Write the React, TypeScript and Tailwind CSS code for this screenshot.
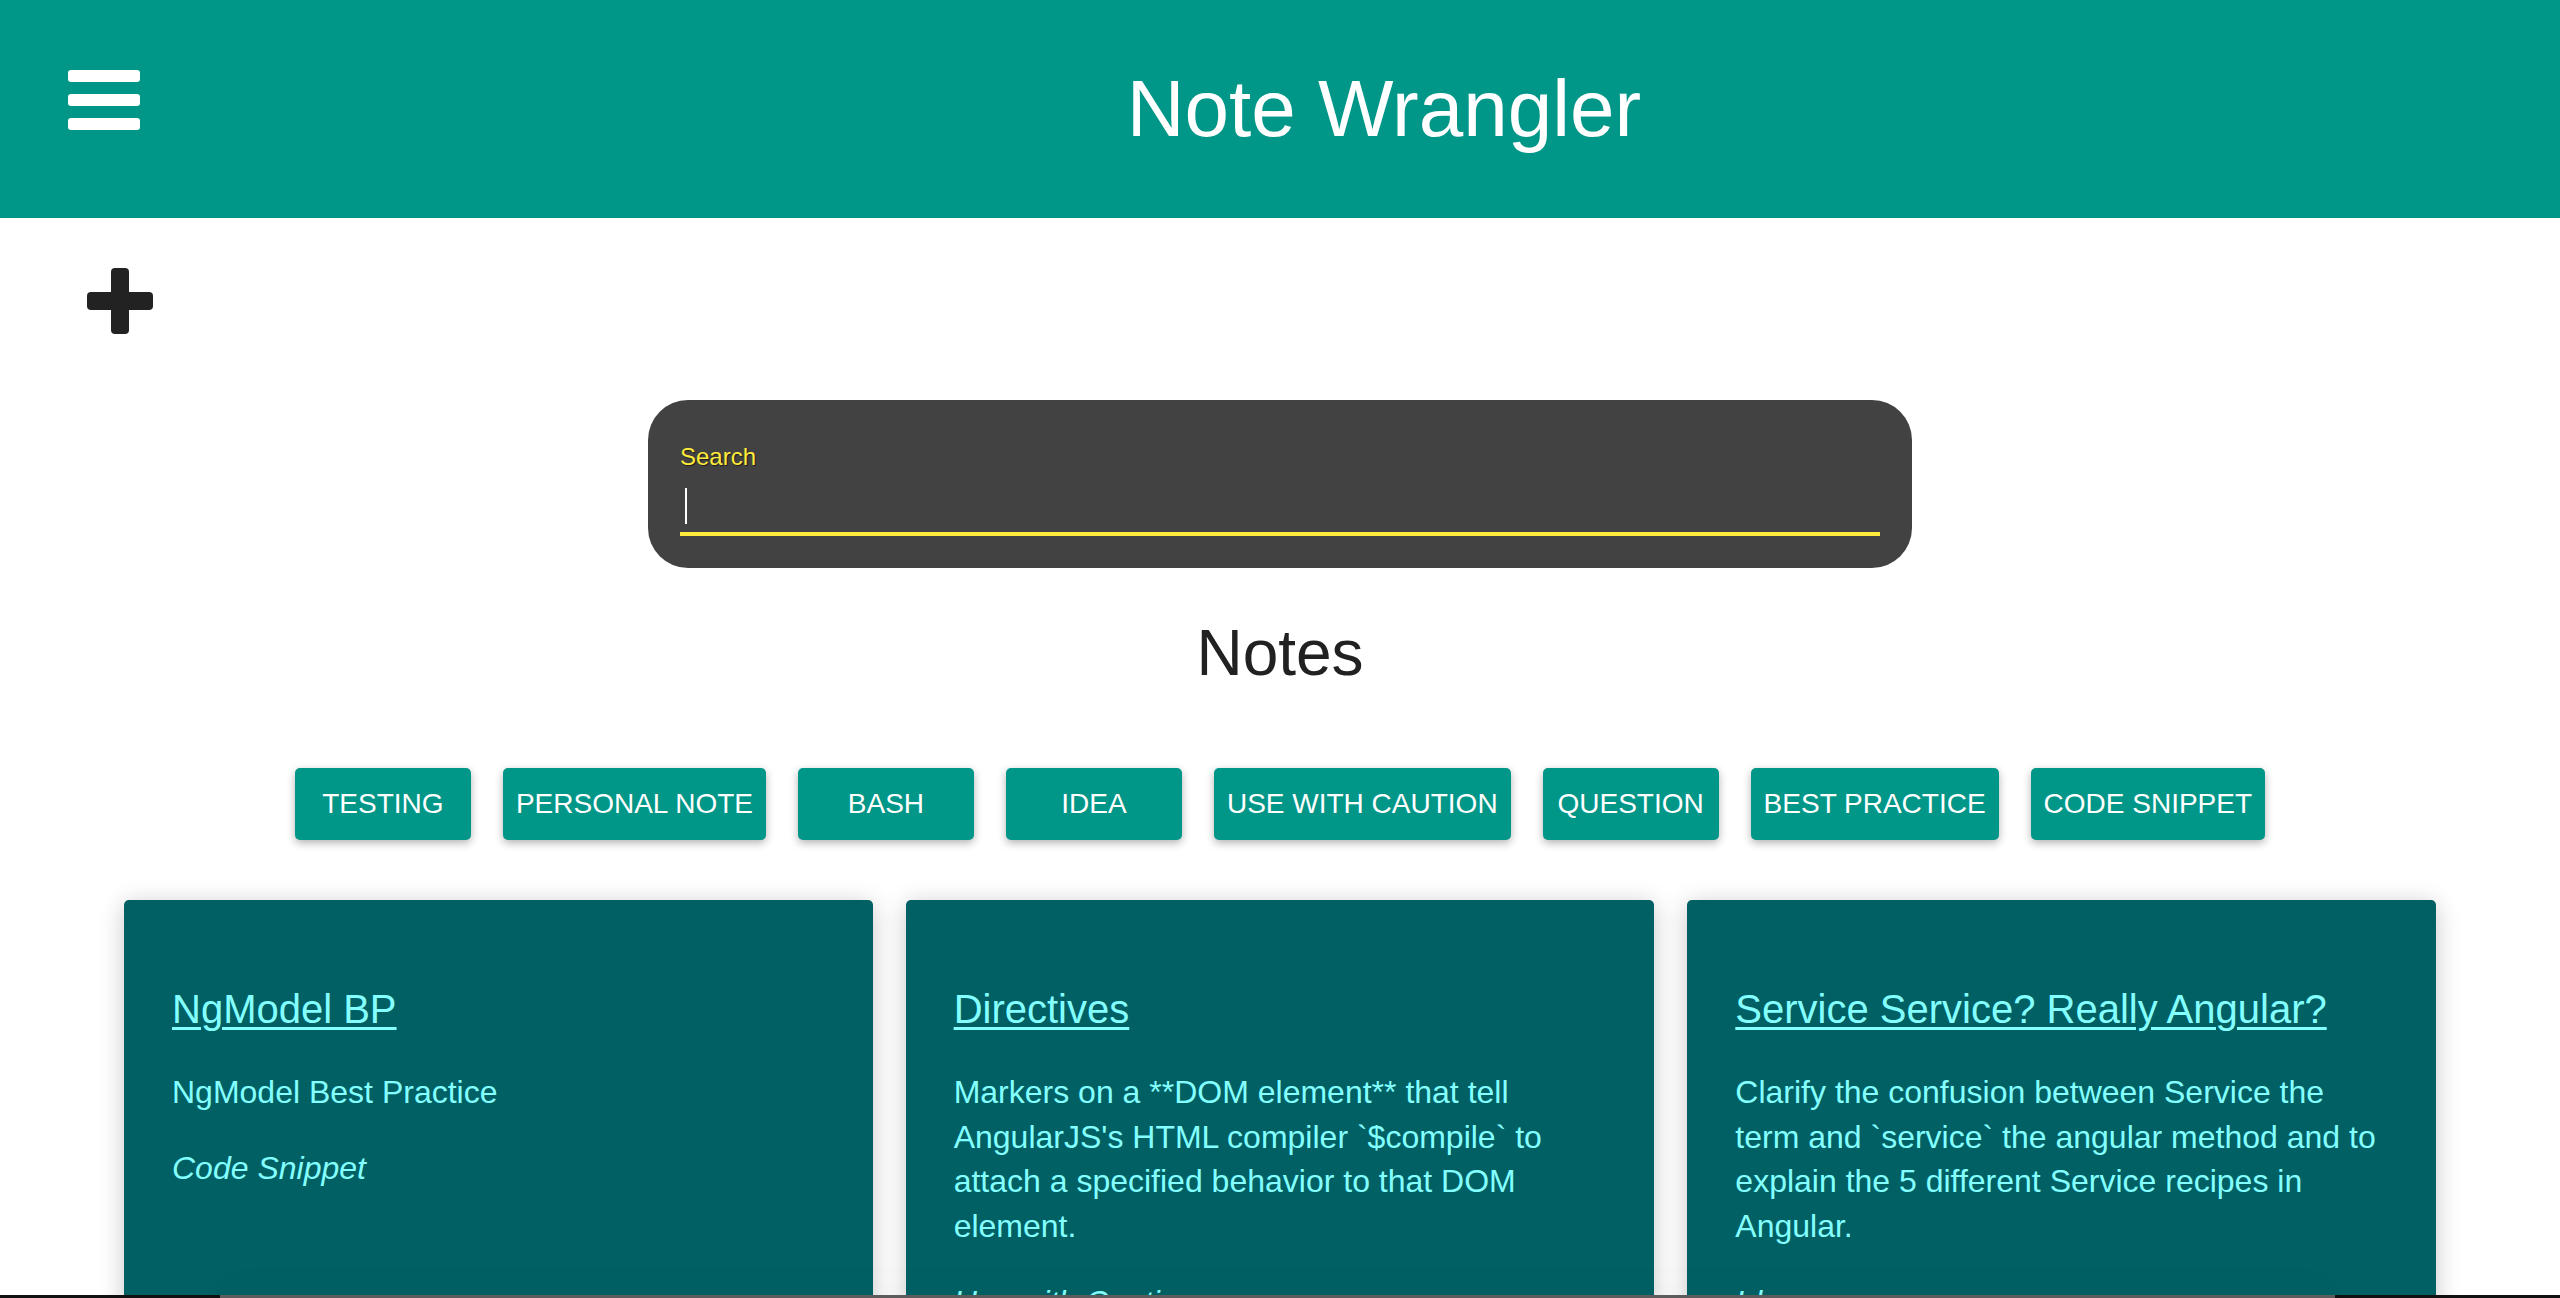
import React from "react";

const tags = [
  "Testing",
  "Personal Note",
  "Bash",
  "Idea",
  "Use with Caution",
  "Question",
  "Best Practice",
  "Code Snippet",
];

const notes = [
  {
    title: "NgModel BP",
    body: "NgModel Best Practice",
    tag: "Code Snippet",
  },
  {
    title: "Directives",
    body: "Markers on a **DOM element** that tell AngularJS's HTML compiler `$compile` to attach a specified behavior to that DOM element.",
    tag: "Use with Caution",
  },
  {
    title: "Service Service? Really Angular?",
    body: "Clarify the confusion between Service the term and `service` the angular method and to explain the 5 different Service recipes in Angular.",
    tag: "Idea",
  },
];

export default function App() {
  return (
    <div className="min-h-screen bg-white font-['Liberation_Sans',Arial,sans-serif] text-[#212121]">
      <header className="flex h-[218px] bg-[#009688] text-white">
        <div className="w-[208px] shrink-0 pl-[68px] pt-[70px]">
          <button className="flex flex-col gap-[12px]" aria-label="menu">
            <span className="block h-[12px] w-[72px] rounded-[3px] bg-white" />
            <span className="block h-[12px] w-[72px] rounded-[3px] bg-white" />
            <span className="block h-[12px] w-[72px] rounded-[3px] bg-white" />
          </button>
        </div>
        <div className="flex flex-1 items-center justify-center">
          <h1 className="text-[80px] font-normal leading-[1.15]">Note Wrangler</h1>
        </div>
      </header>

      <main className="flex flex-col">
        <div className="pl-[87px] pt-[50px]">
          <svg className="block" width="66" height="66" viewBox="0 0 66 66">
            <rect x="24" y="0" width="18" height="66" rx="4" fill="#222222" />
            <rect x="0" y="24" width="66" height="18" rx="4" fill="#222222" />
          </svg>
        </div>

        <div className="mt-[66px] flex justify-center">
          <div className="flex h-[168px] w-[1264px] flex-col rounded-[40px] bg-[#424242] px-[32px] pt-[43px]">
            <label className="text-[24px] leading-[28px] text-[#ffeb3b] [text-shadow:1px_1px_1px_rgba(0,0,0,0.6)]">
              Search
            </label>
            <div className="h-[61px]">
              <span className="ml-[5px] mt-[17px] block h-[36px] w-[2px] bg-white" />
            </div>
            <div className="h-[4px] bg-[#ffeb3b]" />
          </div>
        </div>

        <h2 className="mt-[47px] text-center text-[64px] font-normal leading-[1.2] text-[#212121]">Notes</h2>

        <div className="mt-[76px] flex justify-center gap-[32px]">
          {tags.map((t) => (
            <button
              key={t}
              className="h-[72px] min-w-[176px] rounded-[5px] bg-[#009688] px-[13px] text-[28px] uppercase text-white shadow-[0_3px_8px_rgba(0,0,0,0.3)]"
            >
              {t}
            </button>
          ))}
        </div>

        <div className="mt-[60px] grid grid-cols-3 gap-[33px] px-[124px] pb-[120px]">
          {notes.map((n) => (
            <div
              key={n.title}
              className="min-h-[520px] rounded-[5px] bg-[#006064] px-[48px] pt-[85px] pb-[60px] text-[#84ffff] shadow-[0_4px_24px_rgba(0,0,0,0.22)]"
            >
              <a href="#" className="block text-[40px] leading-[48px] underline decoration-[3px] underline-offset-[4px]">
                {n.title}
              </a>
              <p className="mt-[37px] text-[32px] leading-[1.4]">{n.body}</p>
              <p className="mt-[31px] text-[32px] italic leading-[1.4]">{n.tag}</p>
            </div>
          ))}
        </div>
      </main>

      <div className="pointer-events-none fixed bottom-0 left-0 right-0 flex h-[3px] bg-[#111111]">
        <div className="ml-[220px] h-full w-[2115px] bg-[#5c5c5c] shadow-[0_0_40px_rgba(0,0,0,0.15)]" />
      </div>
    </div>
  );
}
